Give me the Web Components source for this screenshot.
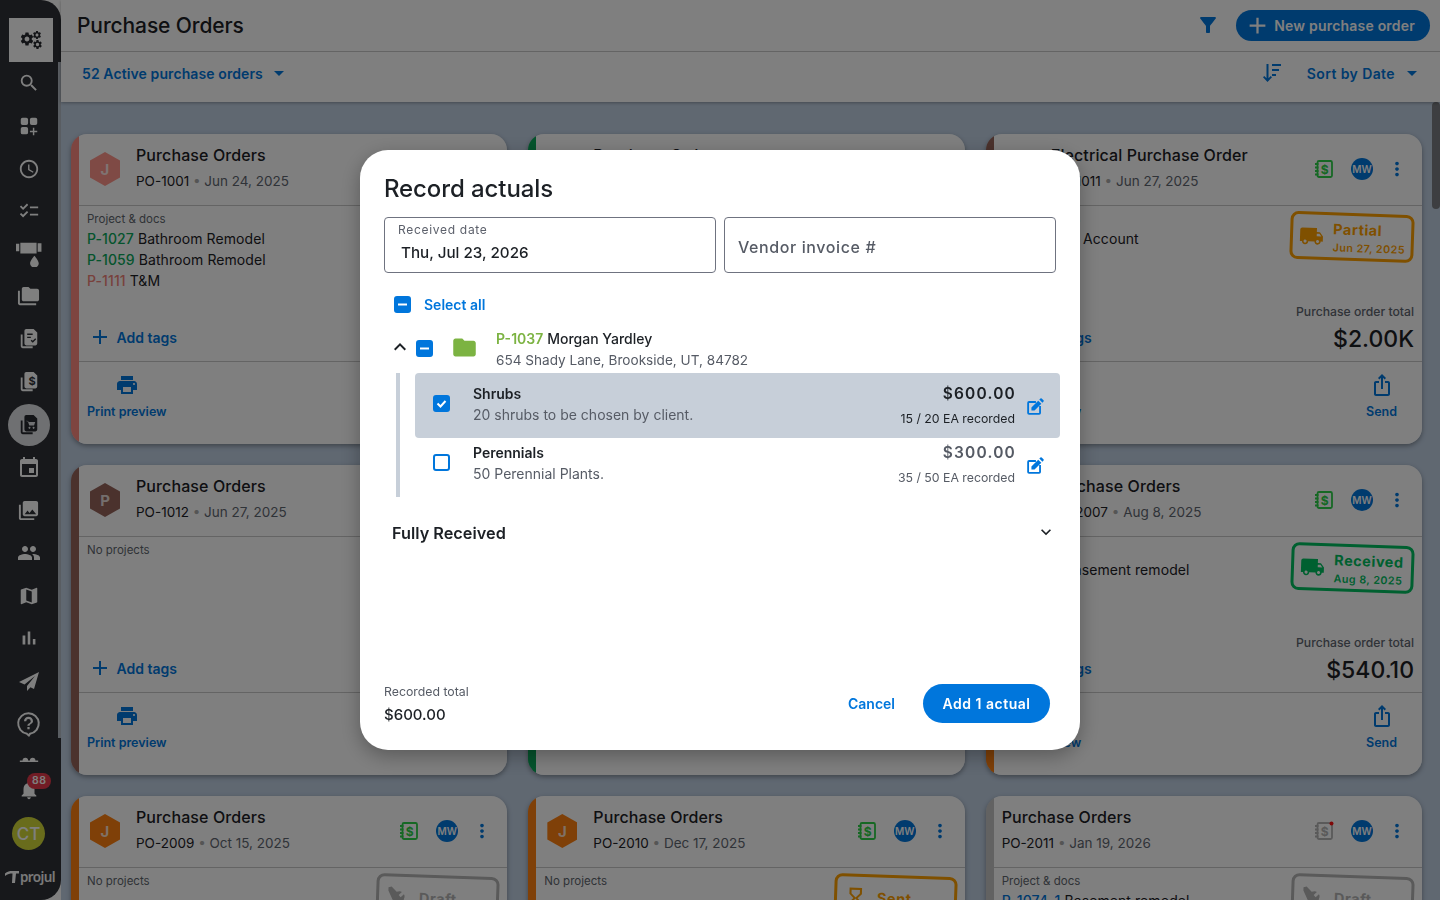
<!DOCTYPE html>
<html lang="en">
<head>
<meta charset="utf-8">
<title>Purchase Orders</title>
<style>
  html, body { margin: 0; height: 100%; overflow: hidden; }
  body { font-family: Inter, "Noto Sans", sans-serif; color: #1c2025; background: #fff; }
  po-card b { font-weight: 500; }
</style>
</head>
<body>
<app-shell>
  <po-card accent="#fc8a80" hex="#ff958a" letter="J" heading="Purchase Orders" po="PO-1001" date="Jun 24, 2025" book="none" label="Project &amp; docs">
    <div><b style="color:#0aa85a">P-1027</b> Bathroom Remodel</div>
    <div><b style="color:#0aa85a">P-1059</b> Bathroom Remodel</div>
    <div><b style="color:#f08278">P-1111</b> T&amp;M</div>
  </po-card>
  <po-card accent="#0aa85a" hex="#0aa85a" letter="E" heading="Purchase Orders" po="PO-1004" date="Jun 25, 2025" label="No projects"></po-card>
  <po-card accent="#96645a" hex="#96645a" letter="E" heading="Electrical Purchase Order" po="PO-1011" date="Jun 27, 2025" stamp="partial" stamp-date="Jun 27, 2025" total="$2.00K" label="Project &amp; docs" send>
    <div><b style="color:#0aa85a">P-1016</b> Tool Account</div>
  </po-card>

  <po-card accent="#96645a" hex="#96645a" letter="P" heading="Purchase Orders" po="PO-1012" date="Jun 27, 2025" label="No projects"></po-card>
  <po-card accent="#0aa85a" hex="#0aa85a" letter="B" heading="Purchase Orders" po="PO-2002" date="Jul 14, 2025" label="No projects"></po-card>
  <po-card accent="#ff8010" hex="#ff8010" letter="J" heading="Purchase Orders" po="PO-2007" date="Aug 8, 2025" stamp="received" stamp-date="Aug 8, 2025" total="$540.10" label="Project &amp; docs" send>
    <div><b style="color:#0aa85a">P-1074-1</b> Basement remodel</div>
  </po-card>

  <po-card accent="#ff8010" hex="#ff8010" letter="J" heading="Purchase Orders" po="PO-2009" date="Oct 15, 2025" stamp="draft" label="No projects"></po-card>
  <po-card accent="#ff8010" hex="#ff8010" letter="J" heading="Purchase Orders" po="PO-2010" date="Dec 17, 2025" stamp="sent" label="No projects"></po-card>
  <po-card accent="#c4c4c4" heading="Purchase Orders" po="PO-2011" date="Jan 19, 2026" stamp="draft" book="grey" label="Project &amp; docs">
    <div><b style="color:#0076dc">P-1074-1</b> Basement remodel</div>
  </po-card>
</app-shell>
<record-actuals></record-actuals>

<script>
const ICONS = {
  search: 'M15.5 14h-.79l-.28-.27A6.47 6.47 0 0 0 16 9.5 6.5 6.5 0 1 0 9.5 16c1.61 0 3.09-.59 4.23-1.57l.27.28v.79l5 4.99L20.49 19l-4.99-5zm-6 0C7.01 14 5 11.99 5 9.5S7.01 5 9.5 5 14 7.01 14 9.5 11.99 14 9.5 14z',
  clock: 'M11.99 2C6.47 2 2 6.48 2 12s4.47 10 9.99 10C17.52 22 22 17.52 22 12S17.52 2 11.99 2zM12 20c-4.42 0-8-3.58-8-8s3.58-8 8-8 8 3.58 8 8-3.58 8-8 8zm.5-13H11v6l5.25 3.15.75-1.23-4.5-2.67z',
  checklist: 'M22 7h-9v2h9V7zm0 8h-9v2h9v-2zM5.54 11 2 7.46l1.41-1.41 2.12 2.12 4.24-4.24 1.41 1.41L5.54 11zm0 8L2 15.46l1.41-1.41 2.12 2.12 4.24-4.24 1.41 1.41L5.54 19z',
  apps: 'M5 3h4a2 2 0 0 1 2 2v4a2 2 0 0 1-2 2H5a2 2 0 0 1-2-2V5a2 2 0 0 1 2-2zm10 0h4a2 2 0 0 1 2 2v4a2 2 0 0 1-2 2h-4a2 2 0 0 1-2-2V5a2 2 0 0 1 2-2zM5 13h4a2 2 0 0 1 2 2v4a2 2 0 0 1-2 2H5a2 2 0 0 1-2-2v-4a2 2 0 0 1 2-2zm11.2 1h1.6v3.2H21v1.6h-3.2V22h-1.6v-3.2H13v-1.6h3.2z',
  pipe: 'M0 2.500h3v7H0zM4 1.500h15v10H4zM20 2h3.500v8H20zM17 13.500s4 4.500 4 7a4 4 0 0 1-8 0c0-2.500 4-7 4-7z',
  folders: 'M3 19h17v2H3c-1.100 0-2-.9-2-2V6h2v13zM23 6v9c0 1.100-.9 2-2 2H7c-1.100 0-2-.9-2-2l.01-11c0-1.100.89-2 1.990-2h5l2 2h7c1.100 0 2 .9 2 2z',
  doccheck: 'M10 1h7l4 4v12a2 2 0 0 1-2 2H9a2 2 0 0 1-2-2V3a2 2 0 0 1 2-2zm0 5v1.500h6V6zm0 3.500V11h4V9.500zm3.800 4.300 2.300 2.300 3.800-3.800-1.100-1.100-2.700 2.700-1.200-1.200zM3 7h2v13h11v2H5a2 2 0 0 1-2-2z',
  docbase: 'M10 1h7l4 4v12a2 2 0 0 1-2 2H9a2 2 0 0 1-2-2V3a2 2 0 0 1 2-2zM3 7h2v13h11v2H5a2 2 0 0 1-2-2z',
  doccart: 'M10 1h7l4 4v12a2 2 0 0 1-2 2H9a2 2 0 0 1-2-2V3a2 2 0 0 1 2-2zM3 7h2v13h11v2H5a2 2 0 0 1-2-2zM9.500 7v1.200h1.300l1.500 4.300h5.200l1.300-3.800H12zM12.500 14a1 1 0 1 0 .01 0zm4.500 0a1 1 0 1 0 .01 0z',
  event: 'M17 12h-5v5h5v-5zM16 1v2H8V1H6v2H5c-1.110 0-1.990.9-1.990 2L3 19c0 1.100.89 2 2 2h14c1.100 0 2-.9 2-2V5c0-1.100-.9-2-2-2h-1V1h-2zm3 18H5V8h14v11z',
  photos: 'M22 16V4c0-1.100-.9-2-2-2H8c-1.100 0-2 .9-2 2v12c0 1.100.9 2 2 2h12c1.100 0 2-.9 2-2zm-11-4 2.030 2.710L16 11l4 5H8l3-4zM2 6v14c0 1.100.9 2 2 2h14v-2H4V6H2z',
  people: 'M16 11c1.660 0 2.990-1.340 2.990-3S17.660 5 16 5c-1.660 0-3 1.340-3 3s1.340 3 3 3zm-8 0c1.660 0 2.990-1.340 2.990-3S9.660 5 8 5C6.340 5 5 6.340 5 8s1.340 3 3 3zm0 2c-2.330 0-7 1.170-7 3.500V19h14v-2.500c0-2.330-4.670-3.500-7-3.500zm8 0c-.29 0-.62.02-.97.05 1.160.84 1.970 1.970 1.970 3.450V19h6v-2.500c0-2.330-4.670-3.500-7-3.500z',
  map: 'M20.500 3l-.16.03L15 5.100 9 3 3.360 4.900c-.21.07-.36.25-.36.48V20.500c0 .28.22.5.5.5l.16-.03L9 18.900l6 2.100 5.640-1.900c.21-.07.36-.25.36-.48V3.500c0-.28-.22-.5-.5-.5zM15 19l-6-2.110V5l6 2.110V19z',
  bars: 'M5 9.200h3V19H5zM10.600 5h2.800v14h-2.800zm5.600 8H19v6h-2.800z',
  plane: 'M22 3 2 13l5.500 2.500L18 7l-8 10v5l3.500-3.800L17 20z',
  help: 'M12 2a10 10 0 0 0-2 19.800L12.500 24l1.500-2.200A10 10 0 0 0 12 2zm0 1.800a8.200 8.200 0 0 1 1 16.340l-1.100 1.100-1-1.100A8.200 8.200 0 0 1 12 3.800zM11 15h2v2h-2zm1-9a4 4 0 0 0-4 4h2a2 2 0 0 1 4 0c0 2-3 1.800-3 4h2c0-1.600 3-2 3-4a4 4 0 0 0-4-4z',
  gift: 'M2 6h20v2H2zM5 6a3 3 0 0 1 6 0zm8 0a3 3 0 0 1 6 0z',
  bell: 'M12 22c1.100 0 2-.9 2-2h-4c0 1.100.89 2 2 2zm6-6v-5c0-3.070-1.640-5.640-4.500-6.320V4c0-.83-.67-1.500-1.500-1.500s-1.500.67-1.500 1.500v.68C7.630 5.360 6 7.920 6 11v5l-2 2v1h16v-1l-2-2z',
  gear: 'M19.140 12.940c.04-.3.06-.61.06-.94 0-.32-.02-.64-.07-.94l2.030-1.580a.49.49 0 0 0 .12-.61l-1.920-3.320a.488.488 0 0 0-.59-.22l-2.390.96c-.5-.38-1.030-.7-1.620-.94l-.36-2.540a.484.484 0 0 0-.48-.41h-3.840c-.24 0-.43.17-.47.41l-.36 2.540c-.59.24-1.130.57-1.620.94l-2.390-.96c-.22-.08-.47 0-.59.22L2.740 8.870c-.12.21-.08.47.12.61l2.030 1.580c-.05.3-.09.63-.09.94s.02.64.07.94l-2.030 1.580a.49.49 0 0 0-.12.61l1.920 3.320c.12.22.37.29.59.22l2.390-.96c.5.38 1.030.7 1.620.94l.36 2.540c.05.24.24.41.48.41h3.840c.24 0 .44-.17.47-.41l.36-2.540c.59-.24 1.130-.56 1.620-.94l2.390.96c.22.08.47 0 .59-.22l1.920-3.320c.12-.22.07-.47-.12-.61l-2.010-1.580zM12 15.600c-1.980 0-3.600-1.620-3.600-3.600s1.620-3.600 3.600-3.600 3.600 1.620 3.600 3.600-1.620 3.600-3.600 3.600z',
  filter: 'M4.250 5.610C6.270 8.200 10 13 10 13v6c0 .55.45 1 1 1h2c.55 0 1-.45 1-1v-6s3.720-4.800 5.740-7.390A.998.998 0 0 0 18.950 4H5.040c-.83 0-1.300.95-.79 1.610z',
  plus: 'M19 13h-6v6h-2v-6H5v-2h6V5h2v6h6v2z',
  caret: 'M7 10l5 5 5-5z',
  sort: 'M6.500 3h2v14.200l2.200-2.200L12 16.300 7.500 21 3 16.300 4.300 15l2.200 2.200zM12 3h9v2h-9zm0 5h7v2h-7zm0 5h4v2h-4z',
  print: 'M19 8H5c-1.660 0-3 1.340-3 3v6h4v4h12v-4h4v-6c0-1.660-1.340-3-3-3zm-3 11H8v-5h8v5zm3-7c-.55 0-1-.45-1-1s.45-1 1-1 1 .45 1 1-.45 1-1 1zm-1-9H6v4h12V3z',
  share: 'M16 5l-1.420 1.420-1.590-1.590V16h-1.980V4.830L9.420 6.420 8 5l4-4 4 4zm4 5v11c0 1.100-.9 2-2 2H6c-1.110 0-2-.9-2-2V10c0-1.110.89-2 2-2h3v2H6v11h12V10h-3V8h3c1.100 0 2 .89 2 2z',
  truck: 'M20 8h-3V4H3c-1.100 0-2 .9-2 2v11h2c0 1.660 1.340 3 3 3s3-1.340 3-3h6c0 1.660 1.340 3 3 3s3-1.340 3-3h2v-5l-3-4zM6 18.500c-.83 0-1.500-.67-1.500-1.500s.67-1.500 1.500-1.500 1.500.67 1.500 1.500-.67 1.500-1.500 1.500zm13.500-9l1.960 2.500H17V9.500h2.500zm-1.500 9c-.83 0-1.500-.67-1.500-1.500s.67-1.500 1.500-1.500 1.500.67 1.500 1.500-.67 1.500-1.500 1.500z',
  hourglass: 'M6 2v6h.01L6 8.010 10 12l-4 4 .01.01H6V22h12v-5.990h-.01L18 16l-4-4 4-3.990-.01-.01H18V2H6zm10 14.500V20H8v-3.500l4-4 4 4zm-4-5l-4-4V4h8v3.500l-4 4z',
  tools: 'M3 2l3-1 5 5c2-1 4-1 5 0l-3 3 2 2 3-3c1 1 1 3 0 5l3 7-2 2-7-3-3 3-4-4 3-3-1-2L3 5z',
  dots: 'M12 8c1.100 0 2-.9 2-2s-.9-2-2-2-2 .9-2 2 .9 2 2 2zm0 2c-1.100 0-2 .9-2 2s.9 2 2 2 2-.9 2-2-.9-2-2-2zm0 6c-1.100 0-2 .9-2 2s.9 2 2 2 2-.9 2-2-.9-2-2-2z',
  chevUp: 'M12 8l-6 6 1.410 1.410L12 10.830l4.590 4.580L18 14z',
  chevDown: 'M16.590 8.590 12 13.170 7.410 8.590 6 10l6 6 6-6z',
  folder: 'M10 4H4c-1.100 0-2 .9-2 2v12c0 1.100.9 2 2 2h16c1.100 0 2-.9 2-2V8c0-1.100-.9-2-2-2h-8l-2-2z',
  edit: 'M3.500 5.500H13v2H5.500v11h11V11h2v7.500a2 2 0 0 1-2 2h-11a2 2 0 0 1-2-2v-11a2 2 0 0 1 2-2zM19.300 2.700l2 2a1 1 0 0 1 0 1.400l-1.200 1.200-3.400-3.400 1.200-1.200a1 1 0 0 1 1.400 0zM15.500 5.100l3.400 3.400-7.400 7.400H8.100v-3.400z'
};

// one element for every material style glyph on the page
class UiIcon extends HTMLElement {
  connectedCallback() {
    const size = this.getAttribute("size") || 24;
    const d = ICONS[this.getAttribute("name")] || "";
    this.attachShadow({ mode: "open" }).innerHTML = `
      <style>
        :host { display: inline-flex; width: ${size}px; height: ${size}px; flex: none; color: inherit; }
        svg { width: 100%; height: 100%; fill: currentColor; display: block; }
      </style>
      <svg viewBox="0 0 24 24"><path d="${d}"/></svg>`;
  }
}
customElements.define("ui-icon", UiIcon);

class MoneyBook extends HTMLElement {
  connectedCallback() {
    const grey = this.getAttribute("tone") === "grey";
    const c = grey ? "#b4b4b4" : "#2cd048";
    this.attachShadow({ mode: "open" }).innerHTML = `
      <style>
        :host { display: inline-flex; width: 20px; height: 20px; flex: none; }
        svg { width: 20px; height: 20px; display: block; }
        text { font: 700 12px Inter, sans-serif; fill: ${c}; }
      </style>
      <svg viewBox="0 0 20 20">
        <rect x="3.500" y="2" width="14.500" height="16" rx="1.500" fill="none" stroke="${c}" stroke-width="1.800"/>
        <path d="M1 5h3.500M1 8.500h3.500M1 12h3.500M1 15.500h3.500" stroke="${c}" stroke-width="1.800"/>
        <text x="10.800" y="14.500" text-anchor="middle">$</text>
        ${grey ? '<circle cx="17.500" cy="2.500" r="2" fill="#ff1010"/>' : ""}
      </svg>`;
  }
}
customElements.define("money-book", MoneyBook);

class NavItem extends HTMLElement {
  connectedCallback() {
    const name = this.getAttribute("icon");
    const money = name === "docmoney";
    this.attachShadow({ mode: "open" }).innerHTML = `
      <style>
        :host { display: flex; height: 42.700px; align-items: center; justify-content: center; color: #fff; width: 57px; flex: none; position: relative; }
        :host([current]) .wrap { color: #26292e; }
        :host([current])::before { content: ""; position: absolute; left: 8px; top: 0; width: 42px; height: 42px; border-radius: 50%; background: #dfe1e4; }
        .wrap { position: relative; display: flex; align-items: center; justify-content: center; }
        svg { position: absolute; left: 7px; top: 1px; width: 14px; height: 18px; }
        text { font: 700 11px Inter, sans-serif; fill: #2e3036; }
      </style>
      <div class="wrap"><ui-icon name="${money ? "docbase" : name}" size="${this.getAttribute("size") || 22}"></ui-icon>
      ${money ? '<svg viewBox="0 0 14 18"><text x="7" y="13" text-anchor="middle">$</text></svg>' : ""}</div>`;
  }
}
customElements.define("nav-item", NavItem);

class SideNav extends HTMLElement {
  connectedCallback() {
    const sizes = { pipe: 26, event: 24, people: 24, plane: 24, photos: 23, folders: 23, help: 27 };
    const items = ["search", "apps", "clock", "checklist", "pipe", "folders", "doccheck", "docmoney", "doccart", "event", "photos", "people", "map", "bars", "plane", "help", "gift"];
    this.attachShadow({ mode: "open" }).innerHTML = `
      <style>
        :host { display: flex; flex-direction: column; width: 61px; flex: none; height: 100%; background: #2e3036; border-radius: 0 20px 20px 0; position: relative; overflow: hidden; color: #fff; }
        .brand { margin: 18px 0 0 9px; width: 44px; height: 44px; background: #fff; color: #26292e; display: flex; align-items: center; justify-content: center; flex: none; position: relative; }
        .gears { width: 22px; height: 22px; position: relative; }
        .scroll { flex: 1; overflow: hidden; min-height: 0; }
        .thumb { position: absolute; left: 58px; top: 62px; width: 3px; height: 676px; background: #b3bac4; }
        .bell { height: 55px; flex: none; display: flex; justify-content: center; position: relative; width: 57px; padding-top: 17px; box-sizing: border-box; }
        .count { position: absolute; left: 27px; top: 11px; background: #e5394a; color: #fff; font-size: 10.500px; font-weight: 600; border-radius: 8px; padding: 0 5px; height: 16px; line-height: 16px; letter-spacing: .5px; }
        .me { width: 33px; height: 33px; border-radius: 50%; background: #d2d838; color: #fff; font-size: 17px; font-weight: 500; display: flex; align-items: center; justify-content: center; margin: 0 0 0 12px; flex: none; }
        .logo { display: flex; align-items: center; gap: 1px; margin: 15px 0 11px 5px; font: 600 13.500px "Noto Sans", sans-serif; letter-spacing: -.6px; color: #f2f2f2; height: 24px; flex: none; }
        .logo svg { width: 14px; height: 14px; fill: #fff; }
      </style>
      <div class="brand">
        <div class="gears">
          <ui-icon name="gear" size="16" style="position:absolute;left:-1px;top:2px"></ui-icon>
          <ui-icon name="gear" size="10" style="position:absolute;left:12px;top:1px"></ui-icon>
          <ui-icon name="gear" size="11" style="position:absolute;left:12px;top:10px"></ui-icon>
        </div>
      </div>
      <div class="thumb"></div>
      <div class="scroll">
        ${items.map(n => `<nav-item icon="${n}" ${n === "doccart" ? "current" : ""} size="${sizes[n] || 22}"></nav-item>`).join("")}
      </div>
      <div class="bell"><ui-icon name="bell" size="22"></ui-icon><span class="count">88</span></div>
      <div class="me">CT</div>
      <div class="logo"><svg viewBox="0 0 14 14"><path d="M0 3.500C2 1.500 5 1 7 1h7v2.500h-3L10 13H7L7.500 3.500C5 3.500 2.500 4 0 6z"/></svg>projul</div>`;
  }
}
customElements.define("side-nav", SideNav);

class PageHeader extends HTMLElement {
  connectedCallback() {
    this.attachShadow({ mode: "open" }).innerHTML = `
      <style>
        :host { display: block; background: #fff; flex: none; box-shadow: 0 1px 3px rgba(0,0,0,.3); position: relative; z-index: 1; }
        .top { height: 51px; display: flex; align-items: center; padding: 0 10px 0 16px; border-bottom: 1px solid #c9c9c9; }
        h1 { margin: 0; font-size: 21px; font-weight: 500; flex: 1; letter-spacing: -.1px; padding-bottom: 1px; }
        .filter { color: #0076dc; margin: 0 16px 1px 0; }
        .new { height: 31px; box-sizing: border-box; padding: 0 15px 1px 8px; border-radius: 16px; background: #0076dc; color: #fff; display: flex; align-items: center; gap: 3px; font-size: 14px; font-weight: 600; letter-spacing: .2px; }
        .sub { height: 42px; padding-bottom: 8px; display: flex; align-items: center; padding-left: 21px; padding-right: 16px; color: #0076dc; font-size: 14px; font-weight: 600; }
        .grow { flex: 1; display: flex; align-items: center; gap: 4px; letter-spacing: .1px; }
        .sort { margin-right: 23px; }
        .by { margin-right: 5px; letter-spacing: .4px; }
      </style>
      <div class="top">
        <h1>Purchase Orders</h1>
        <ui-icon class="filter" name="filter" size="24"></ui-icon>
        <div class="new"><ui-icon name="plus" size="27"></ui-icon>New purchase order</div>
      </div>
      <div class="sub">
        <div class="grow"><span>52 Active purchase orders</span><ui-icon name="caret" size="24"></ui-icon></div>
        <ui-icon class="sort" name="sort" size="24"></ui-icon>
        <span class="by">Sort by Date</span><ui-icon name="caret" size="24"></ui-icon>
      </div>`;
  }
}
customElements.define("page-header", PageHeader);

const STAMPS = {
  partial: { text: "Partial", icon: "truck", color: "#ffa000" },
  received: { text: "Received", icon: "truck", color: "#00c060" },
  draft: { text: "Draft", icon: "tools", color: "#b4b4b4" },
  sent: { text: "Sent", icon: "hourglass", color: "#ffa000" }
};

class PoStamp extends HTMLElement {
  connectedCallback() {
    const s = STAMPS[this.getAttribute("kind")];
    this.attachShadow({ mode: "open" }).innerHTML = `
      <style>
        :host { display: inline-flex; align-items: center; gap: 9px; border: 3px solid ${s.color}; border-radius: 8px; padding: 0 6px 0 6px; color: ${s.color}; transform: rotate(2deg); height: 48px; box-sizing: border-box; margin-top: 1.500px; flex: none; }
        .t { font-size: 14.500px; font-weight: 700; letter-spacing: .5px; line-height: 22px; }
        .d { font-size: 10.700px; font-weight: 600; letter-spacing: .5px; line-height: 15px; white-space: nowrap; }
        .min { min-width: 71px; }
      </style>
      <ui-icon name="${s.icon}" size="25"></ui-icon>
      <div class="min"><div class="t">${s.text}</div><div class="d">${this.getAttribute("date") || ""}</div></div>`;
  }
}
customElements.define("po-stamp", PoStamp);

class HexBadge extends HTMLElement {
  connectedCallback() {
    this.attachShadow({ mode: "open" }).innerHTML = `
      <style>
        :host { display: inline-flex; width: 30px; height: 34px; flex: none; align-items: center; justify-content: center; background: ${this.getAttribute("color")}; clip-path: polygon(50% 0, 100% 25%, 100% 75%, 50% 100%, 0 75%, 0 25%); color: rgba(255,255,255,.8); font-size: 15px; font-weight: 700; }
      </style><span>${this.getAttribute("letter")}</span>`;
  }
}
customElements.define("hex-badge", HexBadge);

class PoCard extends HTMLElement {
  connectedCallback() {
    const a = n => this.getAttribute(n) || "";
    const stamp = a("stamp");
    const total = a("total");
    this.attachShadow({ mode: "open" }).innerHTML = `
      <style>
        :host { display: grid; grid-template-rows: 72px 156px 82px; height: 310px; background: linear-gradient(90deg, ${a("accent")} 8px, #fff 8px); padding-left: 8px; border-radius: 16px; box-shadow: 0 2px 5px rgba(0,0,0,.35); overflow: hidden; box-sizing: border-box; }
        .head { display: flex; align-items: center; padding: 0 16px 1px 11px; border-bottom: 1px solid #c9c9c9; gap: 16px; }
        .head .info { flex: 1; min-width: 0; padding-bottom: 3px; }
        .name { font-size: 16px; font-weight: 500; line-height: 22px; padding-bottom: 5px; white-space: nowrap; letter-spacing: .1px; }
        .meta { font-size: 13.500px; color: #5f6670; line-height: 20px; white-space: nowrap; }
        .meta b { font-weight: 400; color: #1c2025; }
        .meta i { font-style: normal; color: #aaa; }
        .acts { display: flex; align-items: center; }
        .mw { width: 22px; height: 22px; border-radius: 50%; background: #0076dc; color: #fff; font-size: 10px; font-weight: 600; display: flex; align-items: center; justify-content: center; margin: 0 13px 0 17px; }
        .dots { color: #0076dc; margin-right: -2px; }
        .body { display: flex; border-bottom: 1px solid #c9c9c9; padding: 5px 8px 0; justify-content: space-between; min-height: 0; }
        .left { display: flex; flex-direction: column; flex: 1; }
        .lab { font-size: 11.500px; color: #60666e; line-height: 16px; margin-bottom: 1px; }
        .lines { flex: 1; font-size: 14px; line-height: 21px; letter-spacing: .08px; }
        ::slotted(div) { white-space: nowrap; }
        .tags { display: flex; align-items: center; gap: 1px; color: #0076dc; font-size: 14px; font-weight: 600; height: 44px; padding: 0 0 2px 1px; }
        .right { display: flex; flex-direction: column; align-items: flex-end; }
        .spring { flex: 1; }
        .tlab { font-size: 12.200px; color: #5f6670; line-height: 16px; font-weight: 500; }
        .tot { font-size: 23px; font-weight: 500; line-height: 36px; height: 40px; margin-top: 1px; }
        .foot { display: flex; justify-content: space-between; padding: 11px 25px 0 8px; color: #0076dc; font-size: 12.500px; font-weight: 600; }
        .act { display: flex; flex-direction: column; align-items: center; gap: 7px; line-height: 16px; }
      </style>
      <div class="head">
        ${a("letter") ? `<hex-badge color="${a("hex")}" letter="${a("letter")}"></hex-badge>` : ""}
        <div class="info"${a("letter") ? "" : ' style="margin-left:-3px"'}>
          <div class="name">${a("heading")}</div>
          <div class="meta"><b>${a("po")}</b> <i>•</i> ${a("date")}</div>
        </div>
        <div class="acts">
          ${a("book") === "none" ? "" : `<money-book tone="${a("book")}"></money-book>`}
          <div class="mw">MW</div>
          <ui-icon class="dots" name="dots" size="22"></ui-icon>
        </div>
      </div>
      <div class="body">
        <div class="left">
          <div class="lab">${a("label")}</div>
          <div class="lines"><slot></slot></div>
          <div class="tags"><ui-icon name="plus" size="24"></ui-icon>&nbsp;Add tags</div>
        </div>
        <div class="right">
          ${stamp ? `<po-stamp kind="${stamp}" date="${a("stamp-date")}"></po-stamp>` : ""}
          <div class="spring"></div>
          ${total ? `<div class="tlab">Purchase order total</div><div class="tot">${total}</div>` : ""}
        </div>
      </div>
      <div class="foot">
        <div class="act"><ui-icon name="print" size="24"></ui-icon>Print preview</div>
        ${this.hasAttribute("send") ? '<div class="act"><ui-icon name="share" size="24"></ui-icon>Send</div>' : ""}
      </div>`;
  }
}
customElements.define("po-card", PoCard);

class AppShell extends HTMLElement {
  constructor() {
    super();
    this.attachShadow({ mode: "open" }).innerHTML = `
      <style>
        :host { display: flex; height: 900px; width: 1440px; background: #c0d0e3; overflow: hidden; }
        main { flex: 1; display: flex; flex-direction: column; min-width: 0; position: relative; }
        .scroll { flex: 1; overflow: hidden; padding: 32px 18px 0 10px; }
        .grid { display: grid; grid-template-columns: repeat(3, 1fr); column-gap: 21px; row-gap: 21px; }
        .thumb { position: absolute; right: 0; top: 102px; width: 8px; height: 107px; border-radius: 4px; background: #7a7d82; }
        .shell-bg { background: #fff; display: flex; flex: none; }
      </style>
      <div class="shell-bg"><side-nav></side-nav></div>
      <main>
        <page-header></page-header>
        <div class="scroll"><div class="grid"><slot></slot></div></div>
        <div class="thumb"></div>
      </main>`;
  }
}
customElements.define("app-shell", AppShell);

class TickBox extends HTMLElement {
  connectedCallback() {
    const state = this.getAttribute("state");
    const on = state !== "off";
    this.attachShadow({ mode: "open" }).innerHTML = `
      <style>
        :host { display: inline-flex; width: 17px; height: 17px; box-sizing: border-box; border-radius: 3px; border: 2px solid #0076dc; background: ${on ? "#0076dc" : "#fff"}; align-items: center; justify-content: center; flex: none; }
        svg { width: 13px; height: 13px; stroke: #fff; stroke-width: 2; fill: none; }
      </style>
      ${state === "mixed" ? '<svg viewBox="0 0 13 13"><path d="M2 6.500h9"/></svg>' : ""}
      ${state === "on" ? '<svg viewBox="0 0 13 13"><path d="M2.500 6.500l3 3 5-5.500"/></svg>' : ""}`;
  }
}
customElements.define("tick-box", TickBox);

class ActualRow extends HTMLElement {
  connectedCallback() {
    const a = n => this.getAttribute(n);
    this.attachShadow({ mode: "open" }).innerHTML = `
      <style>
        :host { display: flex; align-items: center; padding: 0 14px 10px 18px; border-radius: 4px; height: 59px; box-sizing: border-box; }
        :host([selected]) { background: #c7cfd9; height: 65px; padding-bottom: 4px; }
        .txt { flex: 1; margin-left: 23px; }
        .n { font-size: 14px; font-weight: 600; line-height: 21px; color: #1c2025; }
        .d { font-size: 14px; color: #565b65; line-height: 21px; }
        .amt { text-align: right; margin: 4px 9px 0 0; }
        .m { font-size: 15.500px; font-weight: 600; letter-spacing: 1.200px; color: #565b65; line-height: 22px; margin-right: -1px; }
        :host([selected]) .m { color: #1c2025; }
        .q { font-size: 12.300px; color: #565b65; line-height: 20px; margin-top: 4px; }
        :host([selected]) .q { color: #1c2025; }
        .e { color: #0076dc; margin-top: 7px; }
      </style>
      <tick-box state="${this.hasAttribute("selected") ? "on" : "off"}"></tick-box>
      <div class="txt"><div class="n">${a("name")}</div><div class="d">${a("detail")}</div></div>
      <div class="amt"><div class="m">${a("amount")}</div><div class="q">${a("qty")}</div></div>
      <ui-icon class="e" name="edit" size="22"></ui-icon>`;
  }
}
customElements.define("actual-row", ActualRow);

class RecordActuals extends HTMLElement {
  constructor() {
    super();
    this.attachShadow({ mode: "open" }).innerHTML = `
      <style>
        :host { position: fixed; inset: 0; background: rgba(0,0,0,.5); display: flex; align-items: center; justify-content: center; z-index: 10; }
        .dlg { width: 720px; height: 600px; background: #fff; border-radius: 28px; box-sizing: border-box; padding: 24px 24px 24px; display: flex; flex-direction: column; color: #1c2025; box-shadow: 0 6px 20px rgba(0,0,0,.3); }
        h2 { margin: 0; font-size: 24px; font-weight: 500; line-height: 30px; letter-spacing: -.1px; }
        .fields { display: grid; grid-template-columns: 1fr 1fr; gap: 8px; margin-top: 13px; width: 672px; }
        .fld { height: 56px; border: 1px solid #6f7380; border-radius: 4px; box-sizing: border-box; display: flex; flex-direction: column; justify-content: center; padding: 0 13px; }
        .fl { font-size: 12px; line-height: 16px; color: #5c606b; letter-spacing: .7px; margin-top: -3px; }
        .fv { font-size: 15.200px; font-weight: 500; line-height: 24px; padding-left: 3px; margin-top: 3px; }
        .ph { font-size: 16px; font-weight: 500; letter-spacing: .6px; color: #565b65; padding-top: 3px; }
        .all { display: flex; align-items: center; gap: 13px; margin: 23px 0 0 10px; height: 17px; color: #0076dc; font-size: 14px; font-weight: 600; }
        .proj { display: flex; align-items: flex-start; margin-top: 15px; height: 45px; }
        .proj ui-icon.ch { margin: 7px 0 0 4px; }
        .proj tick-box { margin: 12px 0 0 4px; }
        .proj .fo { color: #7cb342; margin: 6px 0 0 18px; }
        .pt { margin-left: 18px; font-size: 14px; line-height: 21px; }
        .pt b { font-weight: 600; }
        .pt .c { color: #7cb342; font-weight: 600; }
        .pa { color: #565b65; font-size: 13.600px; margin-top: 1px; }
        .rows { margin: 0 -4px 0 12px; border-left: 4px solid #c7cfd9; padding-left: 15px; }
        .full { display: flex; align-items: center; justify-content: space-between; margin: 24px 0 0 8px; font-size: 16.300px; font-weight: 600; height: 24px; }
        .full ui-icon { margin-bottom: 2px; }
        .spring { flex: 1; }
        .end { display: flex; align-items: center; padding-right: 6px; }
        .rec { flex: 1; }
        .rl { font-size: 12.300px; color: #565b65; line-height: 16px; margin-bottom: 4px; }
        .rv { font-size: 15px; font-weight: 500; line-height: 22px; }
        .cancel { color: #0076dc; font-size: 14px; font-weight: 600; margin: 0 28px 4px 0; }
        .go { height: 39px; width: 127px; border-radius: 20px; background: #0076dc; color: #fff; font-size: 14px; font-weight: 600; display: flex; align-items: center; justify-content: center; letter-spacing: .5px; margin-bottom: 3px; }
      </style>
      <div class="dlg">
        <h2>Record actuals</h2>
        <div class="fields">
          <div class="fld"><div class="fl">Received date</div><div class="fv">Thu, Jul 23, 2026</div></div>
          <div class="fld"><div class="ph">Vendor invoice #</div></div>
        </div>
        <div class="all"><tick-box state="mixed"></tick-box>Select all</div>
        <div class="proj">
          <ui-icon class="ch" name="chevUp" size="24"></ui-icon>
          <tick-box state="mixed"></tick-box>
          <ui-icon class="fo" name="folder" size="27"></ui-icon>
          <div class="pt"><div><span class="c">P-1037</span> <b style="font-weight:500">Morgan Yardley</b></div><div class="pa">654 Shady Lane, Brookside, UT, 84782</div></div>
        </div>
        <div class="rows">
          <actual-row selected name="Shrubs" detail="20 shrubs to be chosen by client." amount="$600.00" qty="15 / 20 EA recorded"></actual-row>
          <actual-row name="Perennials" detail="50 Perennial Plants." amount="$300.00" qty="35 / 50 EA recorded"></actual-row>
        </div>
        <div class="full"><span>Fully Received</span><ui-icon name="chevDown" size="20"></ui-icon></div>
        <div class="spring"></div>
        <div class="end">
          <div class="rec"><div class="rl">Recorded total</div><div class="rv">$600.00</div></div>
          <span class="cancel">Cancel</span>
          <div class="go">Add 1 actual</div>
        </div>
      </div>`;
  }
}
customElements.define("record-actuals", RecordActuals);
</script>
</body>
</html>
